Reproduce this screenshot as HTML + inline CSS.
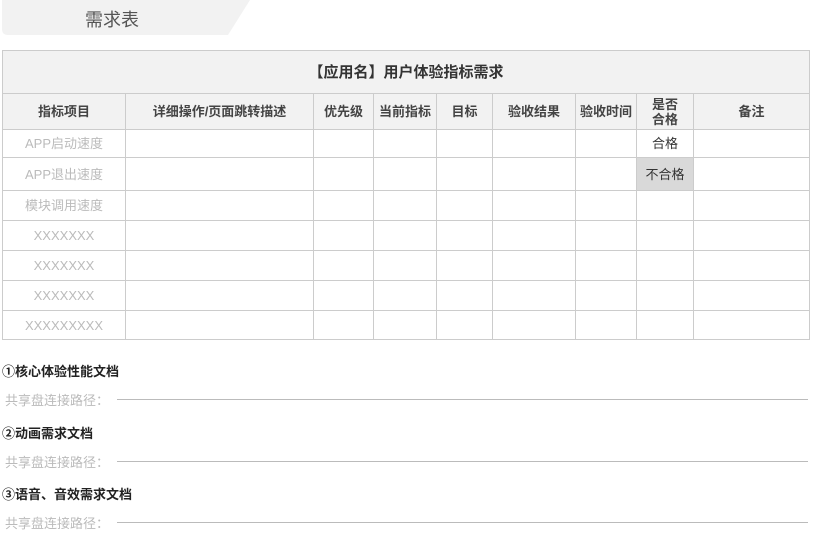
<!DOCTYPE html>
<html><head><meta charset="utf-8"><style>
*{margin:0;padding:0;box-sizing:border-box}
body{width:815px;height:548px;background:#fff;position:relative;overflow:hidden;font-family:"Liberation Sans","Noto Sans CJK SC",sans-serif;color:#333}
.abs{position:absolute}
table{position:absolute;left:2px;top:50px;border-collapse:collapse;table-layout:fixed;width:807px}
td{border:1px solid #ccc;text-align:center;font-size:13px;color:#bbb;padding:0;line-height:15px}
tr.t td{background:#f2f2f2;color:#333;font-weight:bold;font-size:15px;height:43px}
tr.h td{background:#f2f2f2;color:#444;font-weight:bold;font-size:13px;height:36px}
.lbl{font-size:13px;font-weight:bold;color:#222;left:2px}
.path{font-size:13px;color:#bbb;left:5px}
.line{left:117px;width:691px;height:1px;background:#bbb}
</style></head><body>
<svg class="abs" style="left:0;top:0" width="260" height="38"><path d="M2 0 H250 L228 35 H8 Q2 35 2 29 Z" fill="#f2f2f2"/></svg>
<div class="abs" style="left:85px;top:6px;font-size:18px;color:#555">需求表</div>
<table>
<colgroup><col style="width:123px"><col style="width:188px"><col style="width:60px"><col style="width:63px"><col style="width:56px"><col style="width:83px"><col style="width:61px"><col style="width:57px"><col style="width:116px"></colgroup>
<tr class="t"><td colspan="9">【应用名】用户体验指标需求</td></tr>
<tr class="h"><td>指标项目</td><td>详细操作/页面跳转描述</td><td>优先级</td><td>当前指标</td><td>目标</td><td>验收结果</td><td>验收时间</td><td>是否<br>合格</td><td>备注</td></tr>
<tr style="height:28px"><td>APP启动速度</td><td></td><td></td><td></td><td></td><td></td><td></td><td style="color:#333">合格</td><td></td></tr>
<tr style="height:33px"><td>APP退出速度</td><td></td><td></td><td></td><td></td><td></td><td></td><td style="color:#333;background:#d9d9d9">不合格</td><td></td></tr>
<tr style="height:30px"><td>模块调用速度</td><td></td><td></td><td></td><td></td><td></td><td></td><td></td><td></td></tr>
<tr style="height:30px"><td>XXXXXXX</td><td></td><td></td><td></td><td></td><td></td><td></td><td></td><td></td></tr>
<tr style="height:30px"><td>XXXXXXX</td><td></td><td></td><td></td><td></td><td></td><td></td><td></td><td></td></tr>
<tr style="height:30px"><td>XXXXXXX</td><td></td><td></td><td></td><td></td><td></td><td></td><td></td><td></td></tr>
<tr style="height:29px"><td>XXXXXXXXX</td><td></td><td></td><td></td><td></td><td></td><td></td><td></td><td></td></tr>
</table>
<div class="abs lbl" style="top:361px">①核心体验性能文档</div>
<div class="abs path" style="top:390px">共享盘连接路径：</div>
<div class="abs line" style="top:399px"></div>
<div class="abs lbl" style="top:423px">②动画需求文档</div>
<div class="abs path" style="top:452px">共享盘连接路径：</div>
<div class="abs line" style="top:461px"></div>
<div class="abs lbl" style="top:484px">③语音、音效需求文档</div>
<div class="abs path" style="top:513px">共享盘连接路径：</div>
<div class="abs line" style="top:522px"></div>
</body></html>
